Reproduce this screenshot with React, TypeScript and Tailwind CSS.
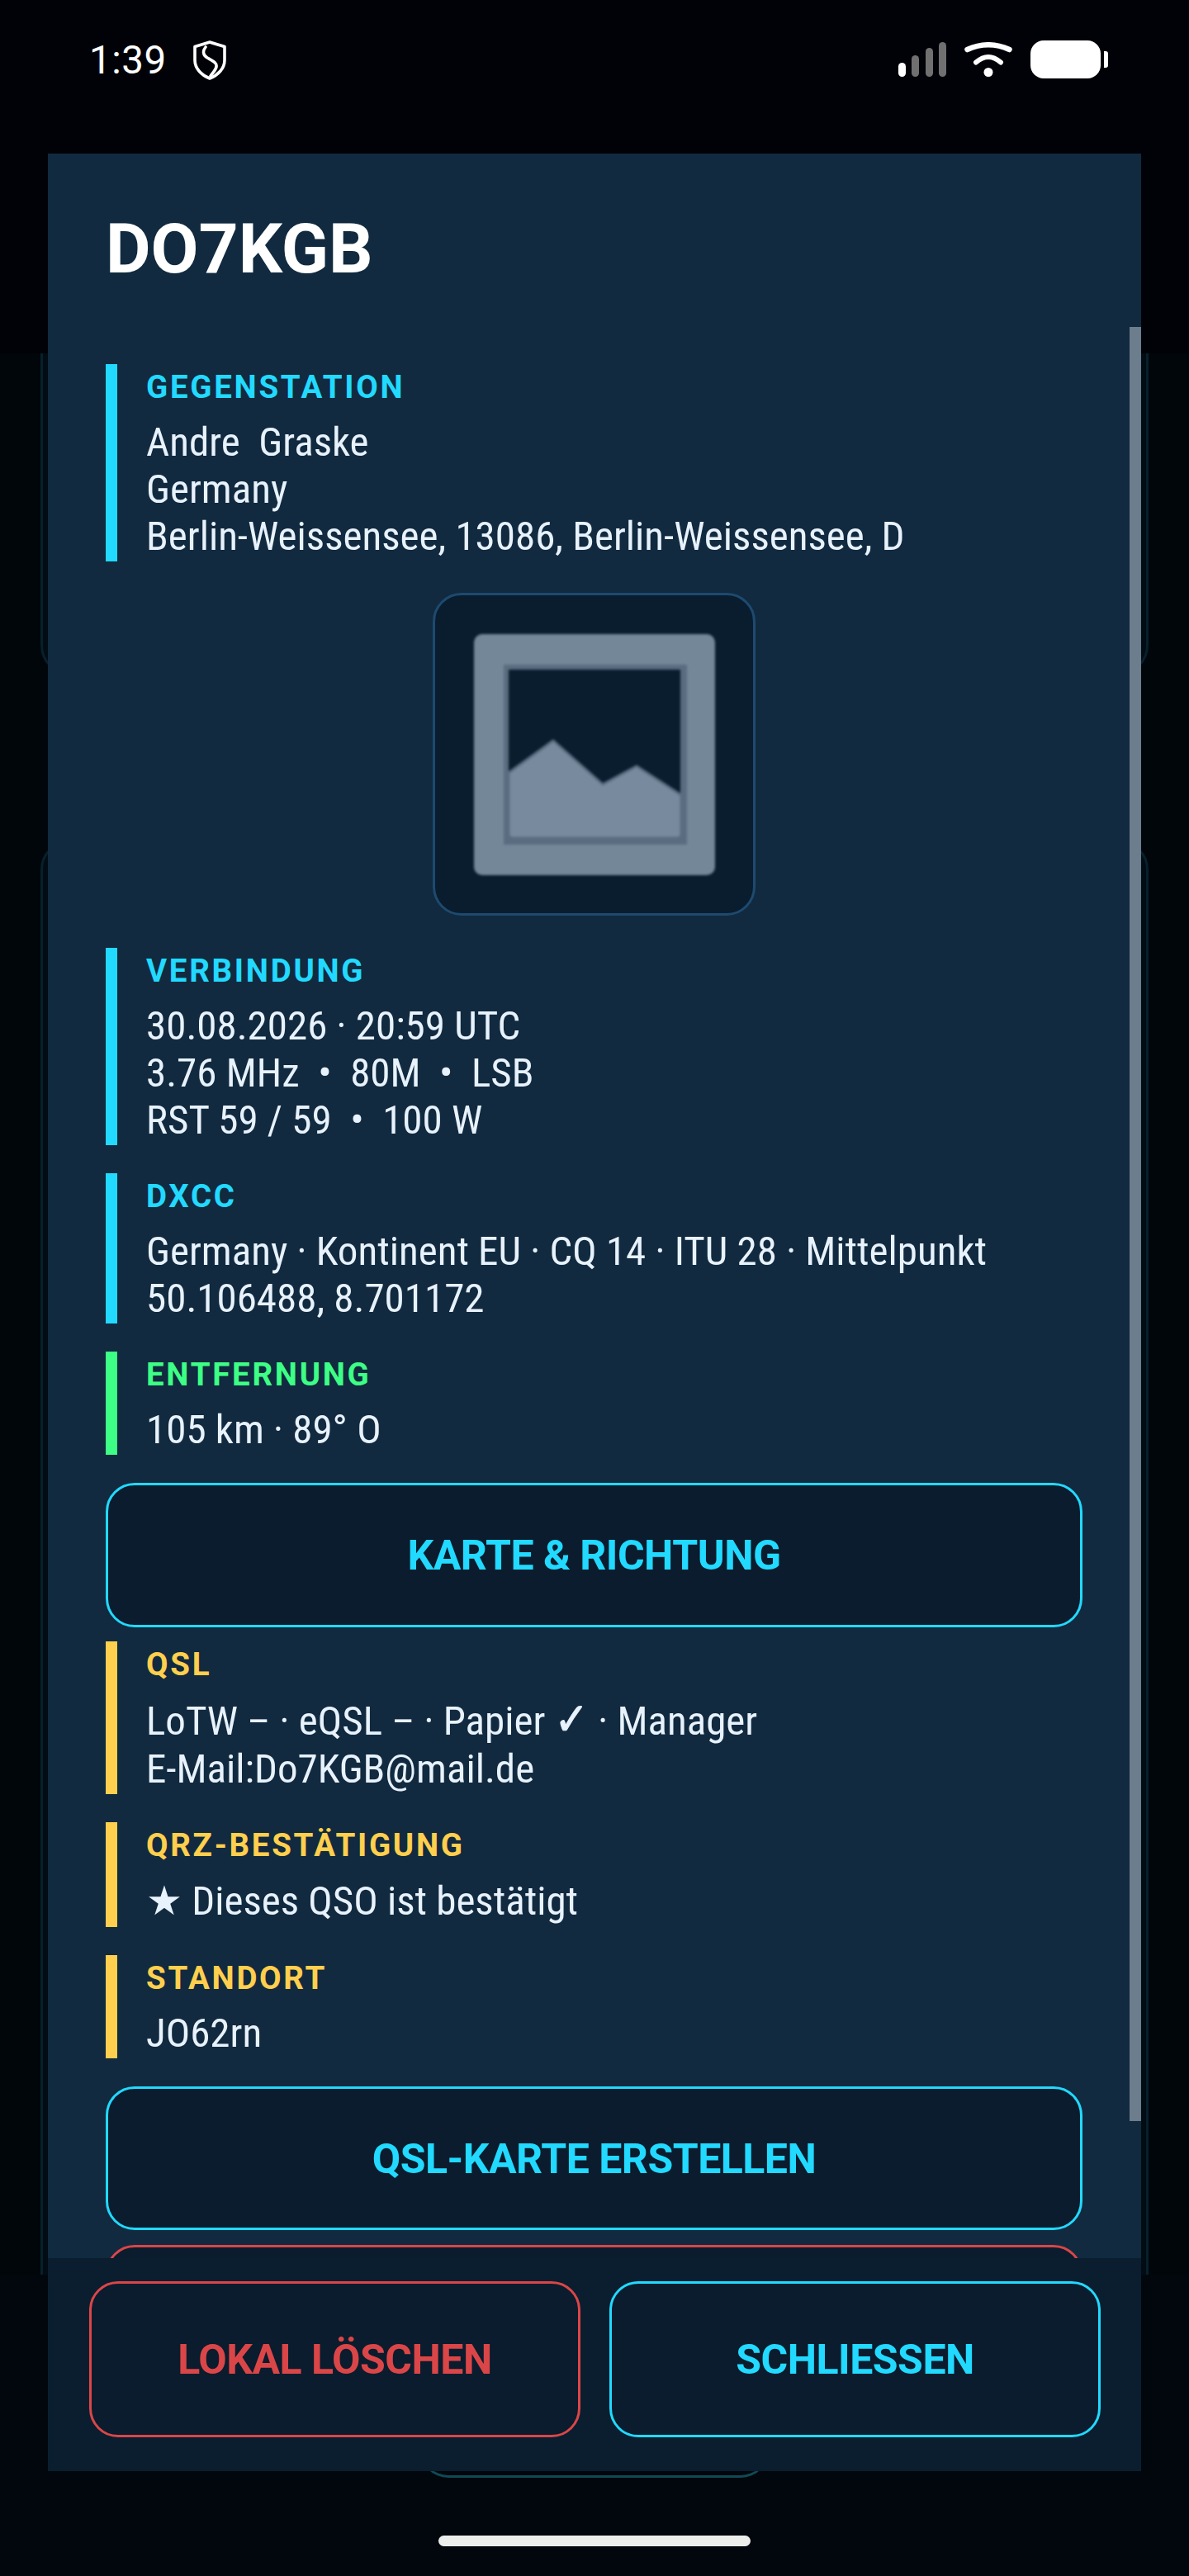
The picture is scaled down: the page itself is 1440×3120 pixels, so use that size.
import React from "react";

function Shield() {
  return (
    <svg width="40" height="48" viewBox="0 0 40 48" fill="none" stroke="#fff" strokeWidth="3.6" strokeLinejoin="round" strokeLinecap="round">
      <path d="M20 2 L38 7.5 V24 C38 34 30 42 20 46 C10 42 2 34 2 24 V7.5 Z" />
      <path d="M15 8 C11 13 12 18 17 21 C24 25 29 27 28 32 C27 36 24 39 21 43" />
    </svg>
  );
}

function Wifi() {
  return (
    <svg width="58" height="42" viewBox="0 0 58 42" fill="none" stroke="#fff" strokeLinecap="round">
      <path d="M3.5 9 Q29 -2.5 54.5 9" strokeWidth="6.5" />
      <path d="M14 24.5 Q29 11.5 44 24.5" strokeWidth="6" />
      <ellipse cx="29" cy="36.5" rx="5.5" ry="5.5" fill="#fff" stroke="none" />
    </svg>
  );
}

function Signal() {
  return (
    <div className="flex items-end gap-[7.5px] h-[42px]">
      <div className="w-[9px] h-[17px] rounded-full bg-white" />
      <div className="w-[9px] h-[26px] rounded-full bg-[#707070]" />
      <div className="w-[9px] h-[35px] rounded-full bg-[#707070]" />
      <div className="w-[9px] h-[42px] rounded-full bg-[#707070]" />
    </div>
  );
}

function ImageIcon() {
  return (
    <svg width="296" height="296" viewBox="0 0 296 296" className="blur-[1.5px]">
      <rect x="2" y="2" width="292" height="292" rx="10" fill="#748799" />
      <rect x="38" y="39" width="222" height="218" fill="#5a6d80" />
      <rect x="44" y="45" width="208" height="204" fill="#091d2e" />
      <path d="M44 170 L98 131 L158 184 L199 162 L253 197 V244 Q253 249 248 249 H49 Q44 249 44 244 Z" fill="#788b9e" stroke="#5a6d80" strokeWidth="3" strokeLinejoin="round" />
    </svg>
  );
}

type SectionProps = {
  label: string;
  lines: React.ReactNode[];
  color: "cyan" | "green" | "yellow";
  className?: string;
  firstLine?: string;
};

function Section({ label, lines, color, className = "", firstLine = "leading-[57px]" }: SectionProps) {
  const border = color === "cyan" ? "border-[#22d9ff]" : color === "green" ? "border-[#3dff85]" : "border-[#ffcf4d]";
  const text = color === "cyan" ? "text-[#22d9ff]" : color === "green" ? "text-[#3dff85]" : "text-[#ffcf4d]";
  return (
    <section className={`border-l-[14px] pl-[35px] pt-[5px] pb-[2px] ${border} ${className}`}>
      <div className={`text-[38.5px] leading-[46px] font-bold tracking-[2.7px] mb-[15px] ${text}`}>{label}</div>
      {lines.map((l, i) => (
        <div key={i} className={`text-[49px] text-[#e8f2fc] whitespace-pre [font-stretch:75%] ${i === 0 ? firstLine : "leading-[57px]"}`}>{l}</div>
      ))}
    </section>
  );
}

function ActionButton({ children, className = "" }: { children?: React.ReactNode; className?: string }) {
  return (
    <button className={`w-full h-[174.5px] shrink-0 rounded-[35px] border-[3.5px] border-[#22d9ff] bg-[#0a1c2d] text-[#22d9ff] text-[50px] font-bold tracking-[-0.5px] pt-[3px] ${className}`}>
      {children}
    </button>
  );
}

export default function App() {
  return (
    <div className="relative w-[1440px] h-[3120px] overflow-hidden bg-[#01060b] font-['Roboto',sans-serif] flex flex-col">
      {/* status bar */}
      <header className="h-[428px] shrink-0 bg-[#010207] flex items-start justify-between pl-[108px] pr-[98px] pt-[49px] text-white">
        <div className="flex items-center gap-[32px]">
          <span className="text-[47.5px] leading-[47px] font-normal tracking-[0.5px]">1:39</span>
          <Shield />
        </div>
        <div className="flex items-start">
          <div className="mt-[2px]"><Signal /></div>
          <div className="ml-[22px] mt-[2px]"><Wifi /></div>
          <div className="ml-[22px] w-[85px] h-[46px] rounded-[16px] bg-white" />
          <div className="ml-[4px] mt-[13px] w-[5px] h-[20px] rounded-r-[3px] bg-white" />
        </div>
      </header>

      {/* dimmed list behind the dialog */}
      <div className="h-[2327px] shrink-0 overflow-hidden px-[49px] flex flex-col gap-[201px]">
        <div className="h-[389px] shrink-0 rounded-b-[35px] border-[3px] border-t-0 border-[#07202c] bg-[#010c14]" />
        <div className="h-[2200px] shrink-0 rounded-t-[35px] border-[3px] border-[#07202c] bg-[#010c14]" />
      </div>

      {/* dimmed bottom action + home indicator */}
      <div className="flex-1 flex flex-col items-center bg-[#01070c]">
        <div className="w-[424px] h-[246px] shrink-0 rounded-b-[35px] border-b-[3px] border-x-[3px] border-[#0f4a55]" />
        <div className="mt-[70px] w-[378px] h-[13px] rounded-full bg-[#eceeec]" />
      </div>

      {/* dialog */}
      <div className="absolute left-[58px] top-[186px] w-[1324px] h-[2807px] bg-[#112a3f] flex flex-col overflow-hidden">
        <div className="h-[210px] shrink-0 pt-[66px] pl-[70px]">
          <h1 className="text-[84px] leading-[100px] font-bold text-white">DO7KGB</h1>
        </div>

        <div className="relative flex-1 min-h-0 overflow-hidden pl-[70px] pr-[71px] pt-[45px] flex flex-col">
          <div className="absolute right-0 top-0 w-[14px] h-[2173px] bg-[#6c7d8d]" />
          <Section color="cyan" label="GEGENSTATION" lines={["Andre  Graske", "Germany", "Berlin-Weissensee, 13086, Berlin-Weissensee, D"]} />
          <div className="mt-[38px] self-center w-[391px] h-[391px] shrink-0 rounded-[35px] border-[3px] border-[#1e4a70] bg-[#091d2e] flex items-center justify-center">
            <ImageIcon />
          </div>
          <Section className="mt-[39px]" color="cyan" label="VERBINDUNG" lines={["30.08.2026 · 20:59 UTC", "3.76 MHz  •  80M  •  LSB", "RST 59 / 59  •  100 W"]} />
          <Section className="mt-[34px]" color="cyan" label="DXCC" lines={["Germany · Kontinent EU · CQ 14 · ITU 28 · Mittelpunkt", "50.106488, 8.701172"]} />
          <Section className="mt-[34px]" color="green" label="ENTFERNUNG" lines={["105 km · 89° O"]} />
          <ActionButton className="mt-[34px]">KARTE &amp; RICHTUNG</ActionButton>
          <Section
            className="mt-[17px]"
            color="yellow"
            label="QSL"
            firstLine="leading-[58px]"
            lines={[
              <>LoTW – · eQSL – · Papier <span className="font-['DejaVu_Sans',sans-serif] font-bold text-[55px] leading-[57px] [-webkit-text-stroke:1px_#e8f2fc]">✓</span> · Manager</>,
              "E-Mail:Do7KGB@mail.de",
            ]}
          />
          <Section className="mt-[34px]" color="yellow" label="QRZ-BESTÄTIGUNG" firstLine="leading-[59px]" lines={["★ Dieses QSO ist bestätigt"]} />
          <Section className="mt-[34px]" color="yellow" label="STANDORT" lines={["JO62rn"]} />
          <ActionButton className="mt-[34px]">QSL-KARTE ERSTELLEN</ActionButton>
          <ActionButton className="mt-[18px] border-[#da4648]" />
        </div>

        <div className="h-[258px] shrink-0 bg-[#0a1e2f] flex gap-[35px] pl-[50px] pr-[49px] pt-[28px] pb-[41px]">
          <button className="flex-1 rounded-[35px] border-[3.5px] border-[#da4648] bg-[#0a1c2d] text-[#da4648] text-[50px] font-bold tracking-[-0.5px] pt-[2px]">LOKAL LÖSCHEN</button>
          <button className="flex-1 rounded-[35px] border-[3.5px] border-[#22d9ff] bg-[#0a1c2d] text-[#22d9ff] text-[50px] font-bold tracking-[-0.5px] pt-[2px]">SCHLIESSEN</button>
        </div>
      </div>
    </div>
  );
}
